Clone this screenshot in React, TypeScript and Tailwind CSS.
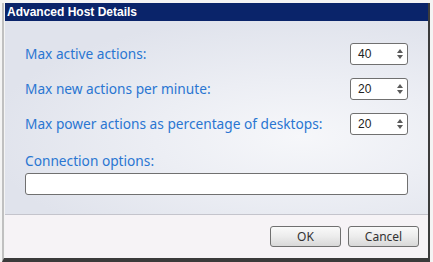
import type { ReactNode } from 'react';

const label = 'text-[13.7px] leading-[16px] text-[#2a76d2] font-["Noto_Sans",sans-serif] whitespace-nowrap';

function Spinner({ value }: { value: string }) {
  return (
    <div className="flex items-center w-[58px] h-[22px] bg-white border border-[#707070] rounded-[3px] pl-[7px] pr-[4px]">
      <span className="flex-1 text-[12px] text-[#222] font-['Liberation_Sans',sans-serif]">{value}</span>
      <div className="flex flex-col items-center gap-[2px]">
        <svg width="6" height="4" viewBox="0 0 6 4">
          <path d="M3 0 L6 4 L0 4 Z" fill="#5a5a5a" />
        </svg>
        <svg width="6" height="4" viewBox="0 0 6 4">
          <path d="M0 0 L6 0 L3 4 Z" fill="#5a5a5a" />
        </svg>
      </div>
    </div>
  );
}

function Row({ text, children }: { text: string; children: ReactNode }) {
  return (
    <div className="flex items-center justify-between h-[22px]">
      <span className={label}>{text}</span>
      {children}
    </div>
  );
}

function Button({ text }: { text: string }) {
  return (
    <button className="w-[71px] h-[21px] rounded-[3px] border border-[#707070] bg-gradient-to-b from-[#fafafa] via-[#ececec] to-[#d8d8d8] text-[12px] text-[#333] font-['Noto_Sans',sans-serif] leading-none">
      {text}
    </button>
  );
}

export default function App() {
  return (
    <div className="w-[433px] h-[262px] bg-[#f4f4f4] pt-[3px] flex flex-col">
      <div className="flex-1 flex flex-col border-l-[2px] border-l-[#c0c0c0] ml-[2px] pl-[1px] border-r-[2px] border-r-[#3c3c3c] mr-[3px] border-b-[4px] border-b-[#3a3a3a] bg-[#f4f4f4]">
        <div className="h-[18px] bg-[#0a246a] flex items-center pl-[2px]">
          <span className="text-white font-bold text-[12px] font-['Liberation_Sans',sans-serif]">Advanced Host Details</span>
        </div>
        <div className="h-[194px] px-[20px] pt-[22px] bg-[radial-gradient(ellipse_at_70%_60%,#f6f7fa_0%,#eceef4_35%,#e0e3ec_75%)] flex flex-col gap-[13px] border-b border-b-[#c4c4cc]">
          <Row text="Max active actions:"><Spinner value="40" /></Row>
          <Row text="Max new actions per minute:"><Spinner value="20" /></Row>
          <Row text="Max power actions as percentage of desktops:"><Spinner value="20" /></Row>
          <div className="flex flex-col gap-[4px] mt-[5px]">
            <span className={label}>Connection options:</span>
            <div className="h-[22px] bg-white border border-[#707070] rounded-[3px]" />
          </div>
        </div>
        <div className="flex-1 bg-[#f6f3f6] flex items-center justify-end gap-[7px] pr-[9px]">
          <Button text="OK" />
          <Button text="Cancel" />
        </div>
      </div>
    </div>
  );
}
